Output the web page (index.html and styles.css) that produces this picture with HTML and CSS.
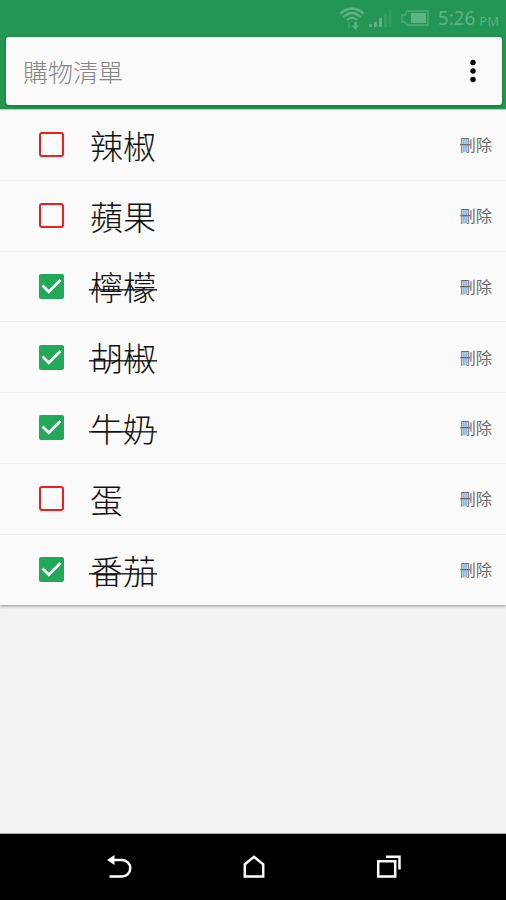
FILE: index.html
```html
<!DOCTYPE html>
<html lang="zh-Hant">
<head>
<meta charset="utf-8">
<title>購物清單</title>
<link rel="stylesheet" href="styles.css">
</head>
<body>
<div class="screen">
  <header class="header">
    <div class="status">
      <svg class="wifi" width="26" height="26" viewBox="0 0 26 26" fill="none" stroke="currentColor">
        <path d="M1.500 8.500Q13-1.500 24.500 8.500" stroke-width="2.600"/>
        <path d="M4.500 12Q13 4 21.500 12M8 15Q13 10.500 18 15" stroke-width="2.300"/>
        <path d="M10 17.500v6" stroke-width="1.500" opacity=".5"/>
        <path d="M16.500 17v5" stroke-width="2.400"/>
        <path d="M12.800 20.500h7.400l-3.700 4.500z" fill="currentColor" stroke="none"/>
      </svg>
      <svg class="signal" width="24" height="18" viewBox="0 0 24 18" fill="currentColor">
        <path d="M0 14h3v3H0zM5 12h3v5H5zM10 8h3v9h-3z"/>
        <path d="M15 4h3v13h-3zM20 0h2.500v17H20z" opacity=".35"/>
      </svg>
      <svg class="battery" width="28" height="17" viewBox="0 0 28 17" fill="none" stroke="currentColor">
        <path d="M6 1h21v14H6l-2-3H1V5h3z" stroke-width="1.300" opacity=".8"/>
        <path d="M10 3h15v10H10z" fill="currentColor" stroke="none"/>
      </svg>
      <span class="time">5:26</span><span class="ampm">PM</span>
    </div>
    <div class="toolbar">
      <h1 class="title">購物清單</h1>
      <svg class="more" width="6" height="24" viewBox="0 0 6 24"><circle cx="3" cy="3.500" r="2.700"/><circle cx="3" cy="12" r="2.700"/><circle cx="3" cy="20.500" r="2.700"/></svg>
    </div>
  </header>
  <ul class="list">
    <li class="row"><span class="box"></span><span class="name">辣椒</span><span class="delete">刪除</span></li>
    <li class="row"><span class="box"></span><span class="name">蘋果</span><span class="delete">刪除</span></li>
    <li class="row done"><span class="box"><svg viewBox="0 0 25 25"><path d="M3.500 11.500l6.300 6.300L21.500 6"/></svg></span><span class="name"><span class="struck">檸檬</span></span><span class="delete">刪除</span></li>
    <li class="row done"><span class="box"><svg viewBox="0 0 25 25"><path d="M3.500 11.500l6.300 6.300L21.500 6"/></svg></span><span class="name"><span class="struck">胡椒</span></span><span class="delete">刪除</span></li>
    <li class="row done"><span class="box"><svg viewBox="0 0 25 25"><path d="M3.500 11.500l6.300 6.300L21.500 6"/></svg></span><span class="name"><span class="struck">牛奶</span></span><span class="delete">刪除</span></li>
    <li class="row"><span class="box"></span><span class="name">蛋</span><span class="delete">刪除</span></li>
    <li class="row done"><span class="box"><svg viewBox="0 0 25 25"><path d="M3.500 11.500l6.300 6.300L21.500 6"/></svg></span><span class="name"><span class="struck">番茄</span></span><span class="delete">刪除</span></li>
  </ul>
  <nav class="nav">
    <svg width="26" height="26" viewBox="0 0 26 26"><path d="M6 6h10a8.200 8.200 0 0 1 0 16.500H3.500"/><path class="solid" d="M1 6l7.500-5v10z"/></svg>
    <svg width="26" height="26" viewBox="0 0 26 26"><path d="M3.800 10.300L13 2.800l9.200 7.500v12.200H3.800z"/></svg>
    <svg width="26" height="26" viewBox="0 0 26 26"><path d="M2.200 7.200h17v15.300h-17zM10 2.700h13.500V15.500"/></svg>
  </nav>
</div>
</body>
</html>
```

FILE: styles.css
```css
body {
  margin: 0;
  font-family: "Noto Sans CJK TC", sans-serif;
}

.screen {
  display: flex;
  flex-direction: column;
  height: 900px;
  background: #f1f3f5;
}

.header {
  box-sizing: border-box;
  height: 110px;
  padding: 0 4px 0 6px;
  background: #229652;
  border-bottom: 1px solid #bcdcc9;
}

.status {
  display: flex;
  align-items: center;
  justify-content: flex-end;
  height: 37px;
  padding-right: 3px;
  color: #5fb281;
  font-family: "Noto Sans", sans-serif;
}

.wifi { margin: 0 4px 2px 0; }
.signal { margin: 0 8px 0 0; }
.battery { margin: 0 9px 1px 0; }

.time {
  font-size: 19px;
  line-height: 37px;
}

.ampm {
  margin-left: 4px;
  font-size: 13px;
  line-height: 20px;
  padding-top: 4px;
}

.toolbar {
  display: flex;
  align-items: center;
  justify-content: space-between;
  box-sizing: border-box;
  height: 68px;
  padding: 0 26px 0 17px;
  border-radius: 3px;
  background: #fafafa;
  box-shadow: 0 1px 3px #007b32;
}

.title {
  margin: 0;
  color: #868686;
  font-size: 25px;
  font-weight: 300;
  line-height: 36px;
}

.list {
  margin: 0;
  padding: 0;
  list-style: none;
  background: #fafafa;
  box-shadow: 0 1px 3px #888;
}

.row {
  display: flex;
  align-items: center;
  box-sizing: border-box;
  height: 70.75px;
  padding: 0 14px 0 38.5px;
  border-bottom: 1px solid #f0f0f0;
}

.row:last-child { border-bottom: 0; }

.box {
  box-sizing: border-box;
  width: 25px;
  height: 25px;
  margin-right: 26.5px;
  border: 2px solid #f21d1d;
  border-radius: 3px;
}

.done .box {
  border: 0;
  border-radius: 2px;
  background: #22a958;
}

.box svg {
  display: block;
  fill: none;
  stroke: #fff;
  stroke-width: 2.7;
}

.name {
  flex: 1;
  color: #111;
  font-size: 33px;
  font-weight: 300;
  line-height: 48px;
}

.struck {
  margin: 0 -1px;
  padding: 0 1px;
  background: linear-gradient(#333, #333) 0 57.5% / 100% 1.6px no-repeat;
}

.delete {
  margin-top: -1px;
  color: #6c6c6c;
  font-size: 16.3px;
  line-height: 24px;
}

.nav {
  display: flex;
  align-items: center;
  justify-content: space-between;
  box-sizing: border-box;
  height: 67px;
  margin-top: auto;
  padding: 0 104px 0 106px;
  border-top: 1px solid #aaa;
  background: #000;
}

.nav path {
  fill: none;
  stroke: #fff;
  stroke-width: 2.5;
}

.nav .solid {
  fill: #fff;
  stroke: none;
}
```
